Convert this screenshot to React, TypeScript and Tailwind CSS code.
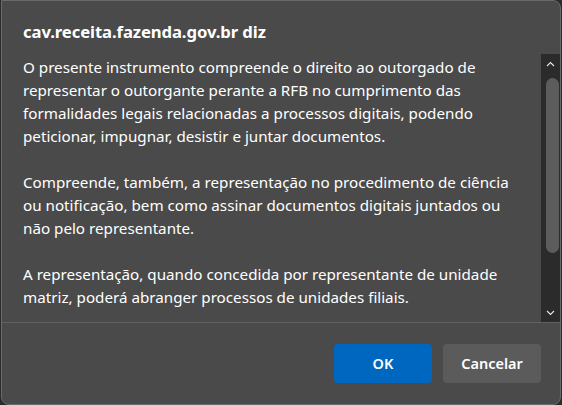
import React from "react";

const paragraphs = [
  [
    "O presente instrumento compreende o direito ao outorgado de",
    "representar o outorgante perante a RFB no cumprimento das",
    "formalidades legais relacionadas a processos digitais, podendo",
    "peticionar, impugnar, desistir e juntar documentos.",
  ],
  [
    "Compreende, também, a representação no procedimento de ciência",
    "ou notificação, bem como assinar documentos digitais juntados ou",
    "não pelo representante.",
  ],
  [
    "A representação, quando concedida por representante de unidade",
    "matriz, poderá abranger processos de unidades filiais.",
  ],
];

function Chevron({ up }: { up?: boolean }) {
  return (
    <svg width="9" height="6" viewBox="0 0 9 6" className="block">
      <polyline
        points={up ? "1,5 4.5,1.5 8,5" : "1,1 4.5,4.5 8,1"}
        fill="none"
        stroke="#e8e8e8"
        strokeWidth="1.1"
      />
    </svg>
  );
}

export default function App() {
  return (
    <div
      className="w-[562px] h-[405px] bg-[#2c2c2c] pl-px overflow-hidden"
      style={{ fontFamily: '"Noto Sans", "Open Sans", sans-serif' }}
    >
      <div className="w-[560px] h-[405px] bg-[#4a4a4a] border border-[#6a6a6a] rounded-tr-lg rounded-b-lg flex flex-col text-white">
        <div className="h-[53px] pl-[21px] pt-[19px] text-[16.7px] font-bold leading-[24px] tracking-[-0.1px]">
          cav.receita.fazenda.gov.br diz
        </div>

        <div className="h-[268px] flex">
          <div className="flex-1 pl-[21px] pt-[2px] text-[15.2px] leading-[23px] flex flex-col gap-[23px] whitespace-nowrap">
            {paragraphs.map((p, i) => (
              <p key={i}>
                {p.map((line) => (
                  <span key={line} className="block">
                    {line}
                  </span>
                ))}
              </p>
            ))}
          </div>
          <div className="w-[19px] bg-[#2b2b2b] flex flex-col items-center pt-[7px] pb-[6px]">
            <Chevron up />
            <div className="w-[13px] ml-[3px] mt-[11px] h-[175px] bg-[#5c5c5c] rounded-full" />
            <div className="flex-1" />
            <Chevron />
          </div>
        </div>

        <div className="h-px bg-[#616161]" />

        <div className="flex-1 flex justify-end items-start gap-[11px] pt-[21px] pr-[19px]">
          <button className="w-[98px] h-[39px] rounded-[4px] bg-[#0067c0] text-[14.5px] font-semibold">
            OK
          </button>
          <button className="w-[98px] h-[39px] rounded-[4px] bg-[#5b5b5b] text-[14.5px] font-semibold">
            Cancelar
          </button>
        </div>
      </div>
    </div>
  );
}
